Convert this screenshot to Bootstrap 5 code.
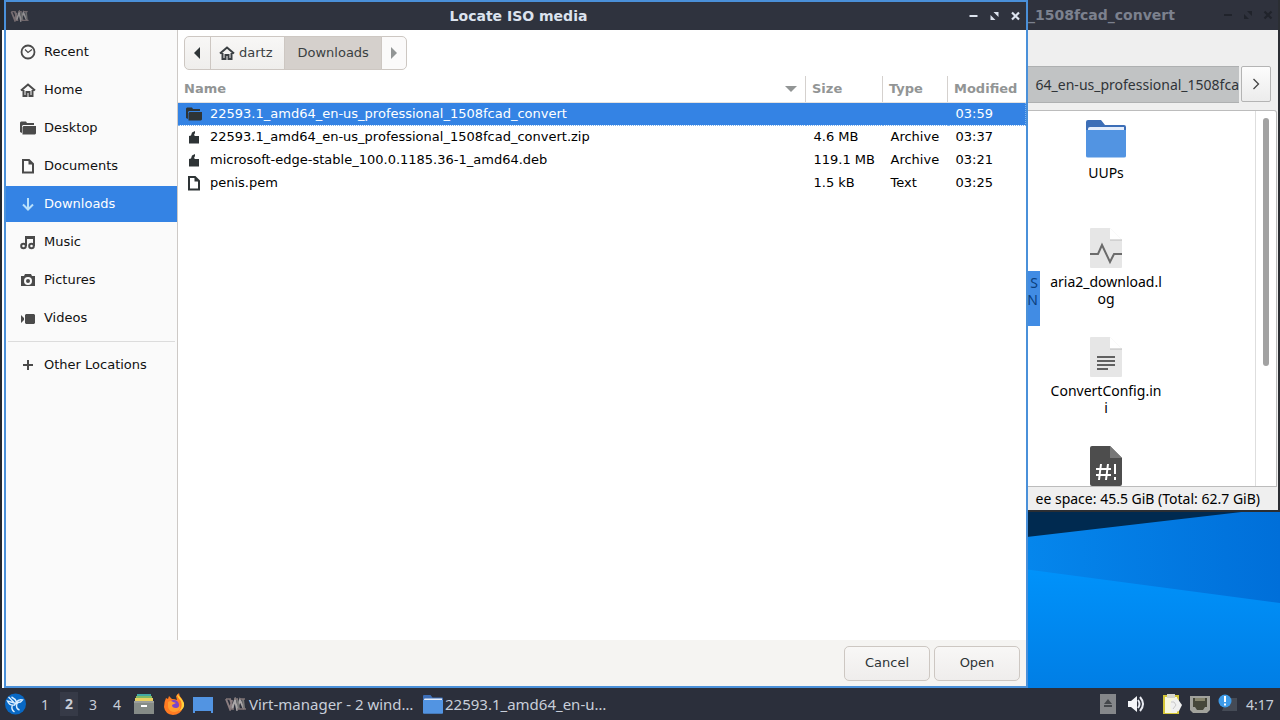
<!DOCTYPE html>
<html lang="en">
<head>
<meta charset="utf-8">
<meta name="viewport" content="width=device-width, initial-scale=1">
<title>Locate ISO media</title>
<link href="https://cdn.jsdelivr.net/npm/bootstrap@5.3.0/dist/css/bootstrap.min.css" rel="stylesheet">
<script src="https://cdn.jsdelivr.net/npm/bootstrap@5.3.0/dist/js/bootstrap.bundle.min.js"></script>
<style>
  :root { --frame: #4a90d9; --dark: #2f333e; --sel: #3483e4; }
  body { font: 13px/20px "DejaVu Sans", sans-serif; color: #000; background: #2b2f3b; }
  svg { display: block; flex: none; }
  .qt { font-family: "Noto Sans", sans-serif; font-size: 14px; line-height: 17px; }
  .desk-area { background: #24272c; min-height: 0; }
  .wallpaper { inset: 0; }
  .under { left: 2px; top: 30px; bottom: 0; width: 4px; background: #fff; }
  /* window frames */
  .dialog-win { left: 4px; top: 0; bottom: 0; width: 80vw; border: 2px solid var(--frame); background: #fff; z-index: 2; }
  .files-win { left: calc(80vw + 4px); right: 0; top: 0; height: 512px; border-right: 2px solid #2b2e33; border-bottom: 2px solid #2b2e33; background: #efefef; }
  .titlebar { height: 28px; flex: none; background: var(--dark); color: #dce3ee; font-family: "DejaVu Sans", sans-serif; font-weight: 700; font-size: 14px; }
  .dialog-title { padding-left: 40px; }
  .titlebar button, .plain { border: 0; background: none; padding: 0; color: inherit; }
  .files-win .titlebar { height: 30px; color: #7c818e; background: #2f323d; }
  .files-win .titlebar button { color: #20232b; }
  /* places */
  .places { width: 172px; background: #fafafa; border-right: 1px solid #cdc9c6; padding-top: 4px; }
  .places a { height: 36px; margin-bottom: 2px; padding-left: 14px; gap: 8px; color: #111; text-decoration: none; }
  .places a svg { color: #4a4a4a; }
  .places a.current { background: var(--sel); color: #fff; }
  .places a.current svg { color: #b8e0fb; }
  .places hr { margin: 5px 2px; border-color: #dcdcdc; opacity: 1; }
  /* path bar */
  .pathbar { margin: 6px; height: 34px; }
  .pathbar button { border: 1px solid #cdc7c2; background: linear-gradient(#f8f7f6, #efeeec); color: #3a3f42; padding: 0 12px 0 8px; font-size: 13px; display: flex; align-items: center; gap: 4px; }
  .pathbar button:first-child { padding: 0 8px 0 7px; border-radius: 5px 0 0 5px; color: #2e3436; }
  .pathbar button:last-child { padding: 0 7px; border-radius: 0 5px 5px 0; background: #fbfafa; color: #929595; }
  .pathbar button + button { margin-left: -1px; }
  .pathbar button.here { background: #d5d0cc; padding: 0 12px; }
  /* file list */
  .filelist { table-layout: fixed; width: 100%; }
  .filelist th { height: 26px; padding: 0 6px; color: #929595; font-weight: 700; border-bottom: 1px solid #e4e2e0; white-space: nowrap; }
  .filelist th + th { border-left: 1px solid #d5d1ce; }
  .filelist td { height: 23px; padding: 0 8px; white-space: nowrap; }
  .filelist td svg { color: #2e3436; }
  .filelist tr.picked td { background: var(--sel); color: #fff; border: 1px dotted #7fb4f0; border-width: 1px 0; }
  .filelist tr.picked td:last-child { border-right-width: 1px; }
  .c-size { width: 77px; } .c-type { width: 65px; } .c-mod { width: 78px; }
  .actions { height: 46px; background: #f5f4f2; gap: 4px; padding: 0 6px; }
  .actions button { width: 86px; height: 35px; border: 1px solid #cdc7c2; border-radius: 5px; background: linear-gradient(#f8f7f6, #efedec); color: #2e3436; }
  /* file manager */
  .fm-tools { height: 80px; flex: none; padding: 36px 7px 0 0; gap: 2px; }
  .fm-path { height: 37px; background: #c1c3c4; border: 1px solid #aeb0b1; border-width: 1px 0; color: #303438; line-height: 36px; }
  .fm-next { width: 30px; height: 36px; border: 1px solid #b4b4b4; border-radius: 2px; background: linear-gradient(#fcfcfc, #ececec); }
  .fm-pane { background: #fff; border: 1px solid #bcbcbc; border-left: 0; border-radius: 0 3px 0 0; min-height: 0; margin-right: 1px; overflow: hidden; }
  .fm-sel { width: 12px; height: 55px; margin-top: 160px; background: #418ce4; color: #0b3f7d; padding: 3px 2px; overflow: hidden; display: flex; flex-direction: column; align-items: flex-end; }
  .fm-items { width: 132px; padding-top: 8px; }
  .fm-item { height: 109px; flex: none; gap: 5px; text-align: center; }
  .fm-track { width: 21px; border-left: 1px solid #dedede; padding: 7px 0 0 7px; }
  .fm-thumb { width: 6px; height: 248px; border-radius: 3px; background: #a2a2a2; }
  .fm-status { height: 23px; flex: none; line-height: 24px; padding-right: 18px; }
  /* panel */
  .panel-bar { height: 32px; background: #2b2f3b; color: #c8ced9; padding: 0 4px; }
  .ws-list { margin: 0 4px 0 6px; }
  .ws { width: 24px; height: 24px; }
  .ws.on { font-weight: 700; }
  .ws.on span { background: #363a47; display: block; width: 18px; margin: 0 auto; line-height: 24px; }
  .task { gap: 2px; width: 186px; font-size: 15px; }
  .clock { width: 30px; }
</style>
</head>
<body class="d-flex flex-column vh-100 overflow-hidden">
<svg width="0" height="0" class="position-absolute" aria-hidden="true">
  <symbol id="virt" viewBox="0 0 22 14"><g fill="none" stroke-width="2"><path d="M1 2l4 10 2-9M5 2l3 9" stroke="#8a7d80"/><path d="M7 12l3-9 2 9 3-9 4 9" stroke="#aaa7a8"/><path d="M12 2l2 10M18 2l1 9" stroke="#777"/></g><path d="M1 2h5M9 2h4M15 2h5M5 12h4M12 12h9" stroke="#817577" stroke-width="1.500"/></symbol>
  <symbol id="min" viewBox="0 0 10 10"><path d="M1 4h8v2H1z" fill="currentColor"/></symbol>
  <symbol id="max" viewBox="0 0 10 10"><path d="M4 1h5v5zM1 4v5h5z" fill="currentColor"/></symbol>
  <symbol id="cls" viewBox="0 0 10 10"><path d="M1.500 1.500l7 7M8.500 1.500l-7 7" stroke="currentColor" stroke-width="2.200"/></symbol>
  <symbol id="home" viewBox="0 0 16 16"><path d="M1 8.500L8 2.500l7 6M3.500 8v6h3v-4h3v4h3V8" fill="none" stroke="currentColor" stroke-width="2"/></symbol>
  <symbol id="fold" viewBox="0 0 16 16"><path d="M1 1.500h5l1 1.500h7v2H3L2 6v7L0 12V2.500z" fill="currentColor"/><path d="M3.500 6H16v7.500l-1 1H2.500V7z" fill="currentColor"/></symbol>
  <symbol id="doc" viewBox="0 0 16 16"><path d="M3 2h6l4 4v8.500H3z" fill="none" stroke="currentColor" stroke-width="2"/><path d="M8.500 2v4.500H13z" fill="currentColor"/></symbol>
  <symbol id="arc" viewBox="0 0 16 16"><path d="M3 7l2-.5 1-3L9 2v2L8 6l1 1h4v7.500H3z" fill="currentColor"/></symbol>
  <symbol id="bluefold" viewBox="0 0 40 38"><path d="M0 2q0-2 2-2h13l4 5h19q2 0 2 2v12H0z" fill="#3c6eb7"/><path d="M2 9q0-2 2-2h34v8H2z" fill="#e4edfb"/><path d="M0 10h40v26q0 1.500-2 1.500H2q-2 0-2-1.500z" fill="#5294e2"/></symbol>
</svg>

<main class="desk-area position-relative flex-grow-1 overflow-hidden">
  <svg class="wallpaper position-absolute w-100 h-100" viewBox="0 0 1280 688" preserveAspectRatio="none" aria-hidden="true">
    <defs>
      <linearGradient id="ray" x1="1028" x2="1280" y1="0" y2="0" gradientUnits="userSpaceOnUse"><stop stop-color="#0586ec"/><stop offset="1" stop-color="#006fd9"/></linearGradient>
      <linearGradient id="glow" x1="0" x2="0" y1="570" y2="688" gradientUnits="userSpaceOnUse"><stop stop-color="#0092fa"/><stop offset="1" stop-color="#007ee5"/></linearGradient>
    </defs>
    <path d="M6 0h1274v688H6z" fill="#002a50"/><path d="M1000 540L1250 511h30v177h-280z" fill="url(#ray)"/><path d="M1000 566L1280 603v85h-280z" fill="url(#glow)"/>
  </svg>
  <div class="under position-absolute"></div>

  <section class="files-win position-absolute d-flex flex-column qt" aria-label="File manager">
    <div class="titlebar d-flex align-items-center justify-content-between pe-1">
      <span class="text-nowrap">_1508fcad_convert</span>
      <span class="d-flex gap-2">
        <button aria-label="Minimize"><svg width="12" height="10"><use href="#min"/></svg></button>
        <button aria-label="Maximize"><svg width="12" height="10"><use href="#max"/></svg></button>
        <button aria-label="Close"><svg width="12" height="10"><use href="#cls"/></svg></button>
      </span>
    </div>
    <div class="fm-tools d-flex">
      <div class="fm-path flex-grow-1 overflow-hidden text-nowrap d-flex justify-content-end"><span>64_en-us_professional_1508fca</span></div>
      <button class="fm-next p-0 d-flex align-items-center justify-content-center" aria-label="Scroll path right"><svg width="8" height="12" viewBox="0 0 8 12"><path d="M1.500 1l5 5-5 5" fill="none" stroke="#444" stroke-width="1.300"/></svg></button>
    </div>
    <div class="fm-pane d-flex flex-grow-1">
      <div class="fm-sel"><span>S</span><span>N</span></div>
      <div class="fm-items d-flex flex-column">
        <div class="fm-item d-flex flex-column align-items-center"><svg width="40" height="40" viewBox="0 -1 40 40"><use href="#bluefold" width="40" height="38"/></svg><span>UUPs</span></div>
        <div class="fm-item d-flex flex-column align-items-center"><svg width="32" height="40" viewBox="0 0 32 40"><path d="M0 1q0-1 1-1h19l12 12v27q0 1-1 1H1q-1 0-1-1z" fill="#e6e6e6"/><path d="M20 0v12h12z" fill="#fff"/><path d="M20 12h12" stroke="#bbb"/><path d="M0 26h8l4-9 8 17 4-8h8" fill="none" stroke="#6b6b6b" stroke-width="2"/></svg><span>aria2_download.l<br>og</span></div>
        <div class="fm-item d-flex flex-column align-items-center"><svg width="32" height="40" viewBox="0 0 32 40"><path d="M0 1q0-1 1-1h19l12 12v27q0 1-1 1H1q-1 0-1-1z" fill="#e6e6e6"/><path d="M20 0v12h12z" fill="#fff"/><path d="M20 12h12" stroke="#bbb"/><path d="M7 20h18M7 24h18M7 28h18M7 32h11" stroke="#606060" stroke-width="2"/></svg><span>ConvertConfig.in<br>i</span></div>
        <div class="fm-item d-flex flex-column align-items-center"><svg width="32" height="40" viewBox="0 0 32 40"><path d="M0 2q0-2 2-2h18l12 12v26q0 2-2 2H2q-2 0-2-2z" fill="#4d4d4d"/><path d="M20 0v12h12z" fill="#777"/><path d="M6 23h15M6 29h15M11 18l-2 16M18 18l-2 16M25 18v10M25 31v3" stroke="#fff" stroke-width="2"/></svg></div>
      </div>
      <div class="fm-track ms-auto"><div class="fm-thumb"></div></div>
    </div>
    <div class="fm-status d-flex justify-content-end overflow-hidden text-nowrap"><span>ee space: 45.5 GiB (Total: 62.7 GiB)</span></div>
  </section>

  <section class="dialog-win position-absolute d-flex flex-column" role="dialog" aria-label="Locate ISO media">
    <header class="titlebar d-flex align-items-center px-1">
      <svg width="20" height="12" opacity=".8"><use href="#virt"/></svg>
      <span class="dialog-title flex-grow-1 text-center">Locate ISO media</span>
      <span class="d-flex gap-2 pe-0">
        <button aria-label="Minimize"><svg width="13" height="10"><use href="#min"/></svg></button>
        <button aria-label="Maximize"><svg width="13" height="10"><use href="#max"/></svg></button>
        <button aria-label="Close"><svg width="13" height="10"><use href="#cls"/></svg></button>
      </span>
    </header>
    <div class="d-flex flex-grow-1">
      <nav class="places flex-shrink-0" aria-label="Places">
        <a href="#" class="d-flex align-items-center"><svg width="16" height="16" viewBox="0 0 16 16"><g fill="none" stroke="currentColor"><circle cx="8" cy="8" r="6.500" stroke-width="1.800"/><path d="M5 5.500L8 8.500l4-3" stroke-width="1.200"/></g></svg>Recent</a>
        <a href="#" class="d-flex align-items-center"><svg width="16" height="16"><use href="#home"/></svg>Home</a>
        <a href="#" class="d-flex align-items-center"><svg width="16" height="16"><use href="#fold"/></svg>Desktop</a>
        <a href="#" class="d-flex align-items-center"><svg width="16" height="16"><use href="#doc"/></svg>Documents</a>
        <a href="#" class="d-flex align-items-center current" aria-current="page"><svg width="16" height="16" viewBox="0 0 16 16"><path d="M8 2v11M3 8.500l5 5 5-5" fill="none" stroke="currentColor" stroke-width="2"/></svg>Downloads</a>
        <a href="#" class="d-flex align-items-center"><svg width="16" height="16" viewBox="0 0 16 16"><g fill="none" stroke="currentColor" stroke-width="2"><circle cx="3.500" cy="12" r="2.300"/><circle cx="11.500" cy="12" r="2.300"/><path d="M6 12V3h8v9"/></g><path d="M5 2h10v3H5z" fill="currentColor"/></svg>Music</a>
        <a href="#" class="d-flex align-items-center"><svg width="16" height="16" viewBox="0 0 16 16"><path d="M5 2h6l1 2h3v10H1V4h3z" fill="currentColor"/><circle cx="8" cy="9" r="3" fill="none" stroke="#fafafa" stroke-width="2"/></svg>Pictures</a>
        <a href="#" class="d-flex align-items-center"><svg width="16" height="16" viewBox="0 0 16 16"><path d="M6 4h8l1 1v8l-1 1H6l-1-1V5zM1 5l3 3v2l-3 3z" fill="currentColor"/></svg>Videos</a>
        <hr>
        <a href="#" class="d-flex align-items-center"><svg width="16" height="16" viewBox="0 0 16 16"><path d="M8 3v10M3 8h10" stroke="currentColor" stroke-width="2"/></svg>Other Locations</a>
      </nav>
      <div class="flex-grow-1 overflow-hidden">
        <div class="pathbar d-flex">
          <button aria-label="Back"><svg width="10" height="12" viewBox="0 0 10 12"><path d="M8 0v12L2 6z" fill="currentColor"/></svg></button>
          <button><svg width="16" height="16"><use href="#home"/></svg>dartz</button>
          <button class="here">Downloads</button>
          <button aria-label="Forward"><svg width="10" height="12" viewBox="0 0 10 12"><path d="M2 0v12l6-6z" fill="currentColor"/></svg></button>
        </div>
        <table class="filelist">
          <colgroup><col><col class="c-size"><col class="c-type"><col class="c-mod"></colgroup>
          <thead><tr>
            <th><span class="d-flex justify-content-between align-items-center">Name<svg width="16" height="8" viewBox="0 0 16 8"><path d="M2 1h12L8 7z" fill="currentColor"/></svg></span></th><th>Size</th><th>Type</th><th>Modified</th>
          </tr></thead>
          <tbody>
            <tr class="picked"><td><span class="d-flex align-items-center gap-2"><svg width="16" height="16"><use href="#fold"/></svg>22593.1_amd64_en-us_professional_1508fcad_convert</span></td><td></td><td></td><td>03:59</td></tr>
            <tr><td><span class="d-flex align-items-center gap-2"><svg width="16" height="16"><use href="#arc"/></svg>22593.1_amd64_en-us_professional_1508fcad_convert.zip</span></td><td>4.6 MB</td><td>Archive</td><td>03:37</td></tr>
            <tr><td><span class="d-flex align-items-center gap-2"><svg width="16" height="16"><use href="#arc"/></svg>microsoft-edge-stable_100.0.1185.36-1_amd64.deb</span></td><td>119.1 MB</td><td>Archive</td><td>03:21</td></tr>
            <tr><td><span class="d-flex align-items-center gap-2"><svg width="16" height="16"><use href="#doc"/></svg>penis.pem</span></td><td>1.5 kB</td><td>Text</td><td>03:25</td></tr>
          </tbody>
        </table>
      </div>
    </div>
    <footer class="actions d-flex align-items-center justify-content-end"><button>Cancel</button><button>Open</button></footer>
  </section>
</main>

<footer class="panel-bar d-flex align-items-center flex-shrink-0 qt">
  <button class="plain" aria-label="Menu"><svg width="23" height="22" viewBox="0 0 22 22"><circle cx="11" cy="11" r="10.500" fill="#0868c4"/><path d="M4 4l6 6-7-2q2 5 7 4l2-3q2-3 6-2l-2 2q-4 0-4 4 0 3 3 4M8 12q-2 4 2 7M12 9q-1-3-5-5" fill="none" stroke="#dcefff" stroke-width="1.400"/></svg></button>
  <span class="ws-list d-flex">
    <button class="plain ws">1</button><button class="plain ws on"><span>2</span></button><button class="plain ws">3</button><button class="plain ws">4</button>
  </span>
  <span class="d-flex gap-2 align-items-center">
    <button class="plain" aria-label="Files"><svg width="22" height="22" viewBox="0 0 22 22"><path d="M4 1h14v4H4z" fill="#41a9a4"/><path d="M3 3h16v5H3z" fill="#7fba66"/><path d="M2 5h18v4H2z" fill="#e8cf62"/><path d="M1 8h20v13H1z" fill="#858b87"/><path d="M1 8h20v2H1z" fill="#9a9e9b"/><path d="M8 12h6v2H8z" fill="#fff"/></svg></button>
    <button class="plain" aria-label="Firefox"><svg width="22" height="22" viewBox="0 0 22 22"><path d="M3 5l2 1 1-3 3 3q3 0 5 1l-1-4 3-3q0 3 3 6 3 4 1 9-3 7-10 7-8-1-9-8 0-5 2-9z" fill="#ff7b22"/><path d="M14 1q0 3 4 7 2 6-2 10 6-2 5-8Q19 6 16 3z" fill="#ffd13c"/><circle cx="11" cy="12" r="5" fill="#7a45c9"/><path d="M5 9q3-2 5 0l3 1-4 2q0 3 4 3 3 0 4-3 1 6-5 7-6 0-7-5z" fill="#ff9d2f"/></svg></button>
    <button class="plain" aria-label="Show desktop"><svg width="20" height="20" viewBox="0 0 20 20"><path d="M0 3h20v16h-2v-2H2v2H0z" fill="#5294e2"/></svg></button>
  </span>
  <button class="plain task d-flex align-items-center ms-2 ps-1 text-nowrap"><svg width="22" height="14"><use href="#virt"/></svg>Virt-manager - 2 wind…</button>
  <button class="plain task d-flex align-items-center ms-3 text-nowrap"><svg width="20" height="19"><use href="#bluefold"/></svg>22593.1_amd64_en-u…</button>
  <span class="d-flex align-items-center ms-auto">
    <svg class="me-2" width="20" height="20" viewBox="0 0 20 20"><path d="M2 0h16v20H2z" fill="#85878a"/><path d="M6 10l4-5 4 5zM6 11h8v2H6z" fill="#44474b"/></svg>
    <svg class="me-3" width="20" height="16" viewBox="0 0 20 16"><path d="M2 5h3l6-5v16l-6-5H2z" fill="#f4f5f8"/><path d="M12 4q3 4 0 8M14 1q6 7 0 14" fill="none" stroke="#e9ebf2" stroke-width="2"/></svg>
    <svg class="me-2" width="20" height="22" viewBox="0 0 20 22"><path d="M1 2h16v19H1z" fill="#d5c638"/><path d="M3 4h12v16H3z" fill="#f8f7dc"/><path d="M5 1h8v4H5z" fill="#d7d7cd"/><path d="M9 8l6-3 5 7-3 6-7 2-2-7z" fill="#f0f0f0"/><path d="M9 9h3l2 3-3 4" fill="none" stroke="#c9c9c9"/></svg>
    <svg class="me-2" width="20" height="18" viewBox="0 0 20 18"><path d="M0 1h20v14l-3 3H3l-3-3z" fill="#a1a29c"/><path d="M3 3h14v9h-2l-2 3H7l-2-3H3z" fill="#45473a"/><path d="M6 3v3M8 3v3M10 3v3M12 3v3M14 3v3" stroke="#c6c29f"/></svg>
    <svg class="me-2" width="20" height="20" viewBox="0 0 20 20"><path d="M9 4h10v13H4z" fill="#454b56"/><circle cx="7" cy="7" r="6.500" fill="#3e9be8"/><path d="M7 2v6M7 9.500v2" stroke="#fff" stroke-width="2"/></svg>
    <span class="clock">4:17</span>
  </span>
</footer>
</body>
</html>
